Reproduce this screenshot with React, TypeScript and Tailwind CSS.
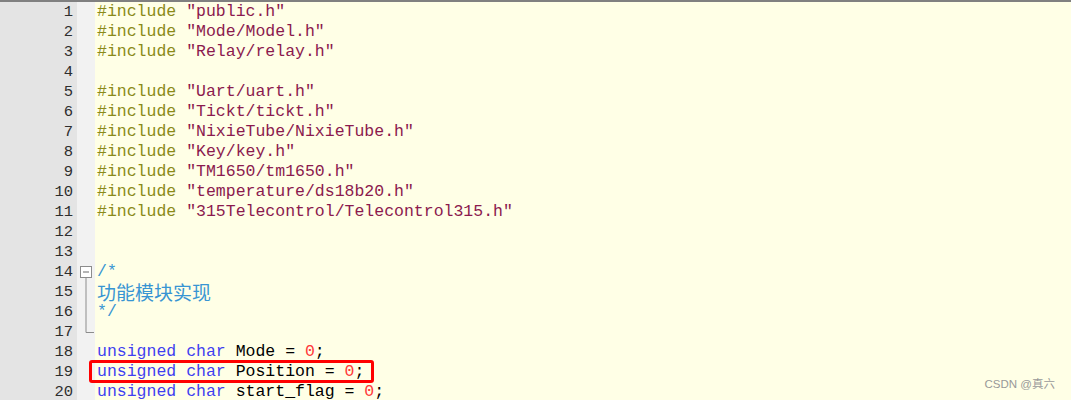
import React from "react";

type Tok = { t: string; c: string };

const PRE = "text-[#8a8a18]";
const STR = "text-[#8b1a4e]";
const KW = "text-[#3f3ff0]";
const NUM = "text-[#ff3a3a]";
const TXT = "text-black";
const CMT = "text-[#3895d3]";

const inc = (file: string): Tok[] => [
  { t: "#include ", c: PRE },
  { t: `"${file}"`, c: STR },
];

const decl = (name: string): Tok[] => [
  { t: "unsigned", c: KW },
  { t: " ", c: TXT },
  { t: "char", c: KW },
  { t: ` ${name} = `, c: TXT },
  { t: "0", c: NUM },
  { t: ";", c: TXT },
];

const lines: Tok[][] = [
  inc("public.h"),
  inc("Mode/Model.h"),
  inc("Relay/relay.h"),
  [],
  inc("Uart/uart.h"),
  inc("Tickt/tickt.h"),
  inc("NixieTube/NixieTube.h"),
  inc("Key/key.h"),
  inc("TM1650/tm1650.h"),
  inc("temperature/ds18b20.h"),
  inc("315Telecontrol/Telecontrol315.h"),
  [],
  [],
  [{ t: "/*", c: CMT }],
  [{ t: "功能模块实现", c: CMT + " cjk" }],
  [{ t: "*/", c: CMT }],
  [],
  decl("Mode"),
  decl("Position"),
  decl("start_flag"),
];

function Fold({ n }: { n: number }) {
  if (n === 14)
    return (
      <svg width="18" height="20" className="block">
        <rect x="3.5" y="4.5" width="11" height="11" fill="#fff" stroke="#8c8c8c" />
        <line x1="6" y1="10" x2="12" y2="10" stroke="#6a6a6a" />
        <line x1="9" y1="15.5" x2="9" y2="20" stroke="#8c8c8c" />
      </svg>
    );
  if (n === 15 || n === 16)
    return (
      <svg width="18" height="20" className="block">
        <line x1="9" y1="0" x2="9" y2="20" stroke="#8c8c8c" />
      </svg>
    );
  if (n === 17)
    return (
      <svg width="18" height="20" className="block">
        <polyline points="9,0 9,10.5 17,10.5" fill="none" stroke="#8c8c8c" />
      </svg>
    );
  return null;
}

export default function App() {
  return (
    <div className="relative h-[400px] w-[1071px] overflow-hidden bg-[#ffffe6]">
      <div className="h-[2px] bg-[#808080]" />
      <div className="flex flex-col">
        {lines.map((toks, i) => {
          const n = i + 1;
          return (
            <div key={n} className="flex h-[20px]">
              <div className="w-[77px] shrink-0 bg-[#e4e4e4] pr-[4px] text-right font-['Liberation_Mono',monospace] text-[15.5px] leading-[20px] text-[#2e2e2e]">
                {n}
              </div>
              <div className="w-[18px] shrink-0 bg-[#f2f2f2]">
                <Fold n={n} />
              </div>
              <div className="relative flex h-[20px] flex-1 items-center whitespace-pre pl-[2px] font-['Liberation_Mono',monospace] text-[16.5px] leading-[20px]">
                {toks.map((tk, j) =>
                  tk.c.endsWith("cjk") ? (
                    <span
                      key={j}
                      className={`${tk.c} font-['Noto_Sans_CJK_SC',sans-serif] text-[19px] leading-[20px]`}
                    >
                      {tk.t}
                    </span>
                  ) : (
                    <span key={j} className={tk.c}>
                      {tk.t}
                    </span>
                  )
                )}
                {n === 19 && (
                  <div className="absolute left-[-6px] top-[-2px] h-[23px] w-[285px] rounded-[3px] border-[3px] border-[#ff0000]" />
                )}
              </div>
            </div>
          );
        })}
      </div>
      <div className="absolute bottom-[7px] right-[16px] font-['Liberation_Sans','Noto_Sans_CJK_SC',sans-serif] text-[11.5px] text-[#999]">
        CSDN @真六
      </div>
    </div>
  );
}
